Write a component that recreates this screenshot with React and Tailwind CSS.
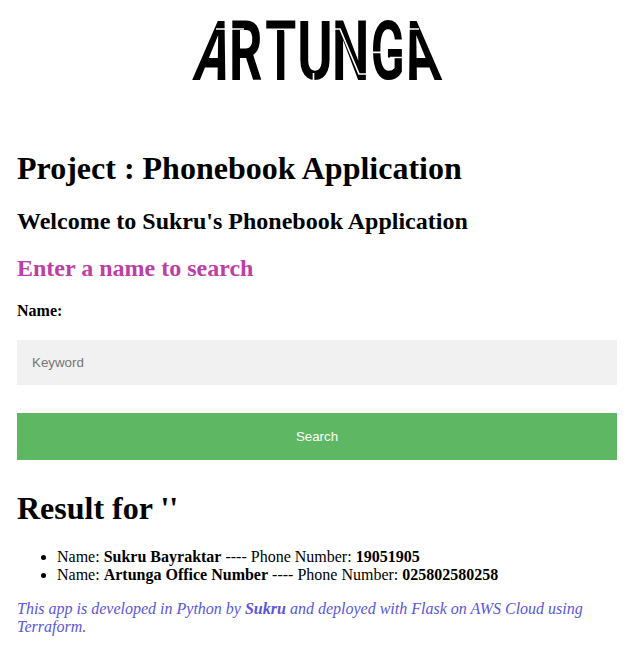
const letters = [
  { char: 'A', transform: 'translate(0 59) skewX(-11.9) scale(0.6 1)' },
  { char: 'R', transform: 'translate(36.9 59) scale(0.63 1)' },
  { char: 'T', transform: 'translate(73.2 59) scale(0.603 1)' },
  { char: 'U', transform: 'translate(105.2 58.4) scale(0.647 0.985)' },
  { char: 'N', transform: 'translate(140 59) scale(0.636 1)' },
  { char: 'G', transform: 'translate(178.8 58.4) scale(0.598 0.975)' },
  { char: 'A', transform: 'translate(217 59) skewX(11.9) scale(0.6 1)' },
];

// Gaps that give the wordmark its stencil look.
const cuts = 'M24 8H34M39 8H52M121.5 52V60M142 8L148 8L167 53H174M180 31.3H189M198 36.5H212M217 8H227';

function Logo() {
  return (
    <svg className="mx-auto block h-[60px] w-[250px] overflow-visible" viewBox="0 0 250 60" role="img" aria-label="ARTUNGA">
      {letters.map(({ char, transform }, i) => (
        <text key={i} transform={transform} className="fill-black font-['Roboto',sans-serif] text-[83px] font-bold">
          {char}
        </text>
      ))}
      <path d={cuts} className="fill-none stroke-white stroke-[1.7]" />
      <path d="M73 7.4H104V11H92.5V9H85V11H73Z" className="fill-white" />
    </svg>
  );
}

const results = [
  { name: 'Sukru Bayraktar', number: '19051905' },
  { name: 'Artunga Office Number', number: '025802580258' },
];

export default function App() {
  return (
    <main className="min-h-screen bg-white pt-[21px] pr-[10px] pl-[17px] font-['Liberation_Serif',serif] text-base leading-[18px] text-black">
      <Logo />
      <h1 className="mt-[69px] text-[32px] leading-[37px] font-bold">Project : Phonebook Application</h1>
      <h2 className="mt-[21px] text-2xl leading-[27px] font-bold">Welcome to Sukru's Phonebook Application</h2>
      <h2 className="mt-5 text-2xl leading-[27px] font-bold text-[#bd3fa5]">Enter a name to search</h2>
      <form onSubmit={(e) => e.preventDefault()}>
        <label htmlFor="name" className="mt-5 block font-bold">Name:</label>
        <input
          id="name"
          placeholder="Keyword"
          className="mt-5 block h-[45px] w-full bg-[#f1f1f1] px-[15px] font-['Liberation_Sans',sans-serif] text-[13.333px] outline-none placeholder:text-[#757575]"
        />
        <button className="mt-7 block h-[47px] w-full bg-[#5eb762] font-['Liberation_Sans',sans-serif] text-[13.333px] text-white">
          Search
        </button>
      </form>
      <h1 className="mt-[30px] text-[32px] leading-[37px] font-bold">Result for ''</h1>
      <ul className="mt-[21px] list-disc pl-10">
        {results.map(({ name, number }) => (
          <li key={number}>
            Name: <b>{name}</b> ---- Phone Number: <b>{number}</b>
          </li>
        ))}
      </ul>
      <p className="mt-4 text-[#5b55dc] italic">
        This app is developed in Python by <b>Sukru</b> and deployed with Flask on AWS Cloud using Terraform.
      </p>
    </main>
  );
}
